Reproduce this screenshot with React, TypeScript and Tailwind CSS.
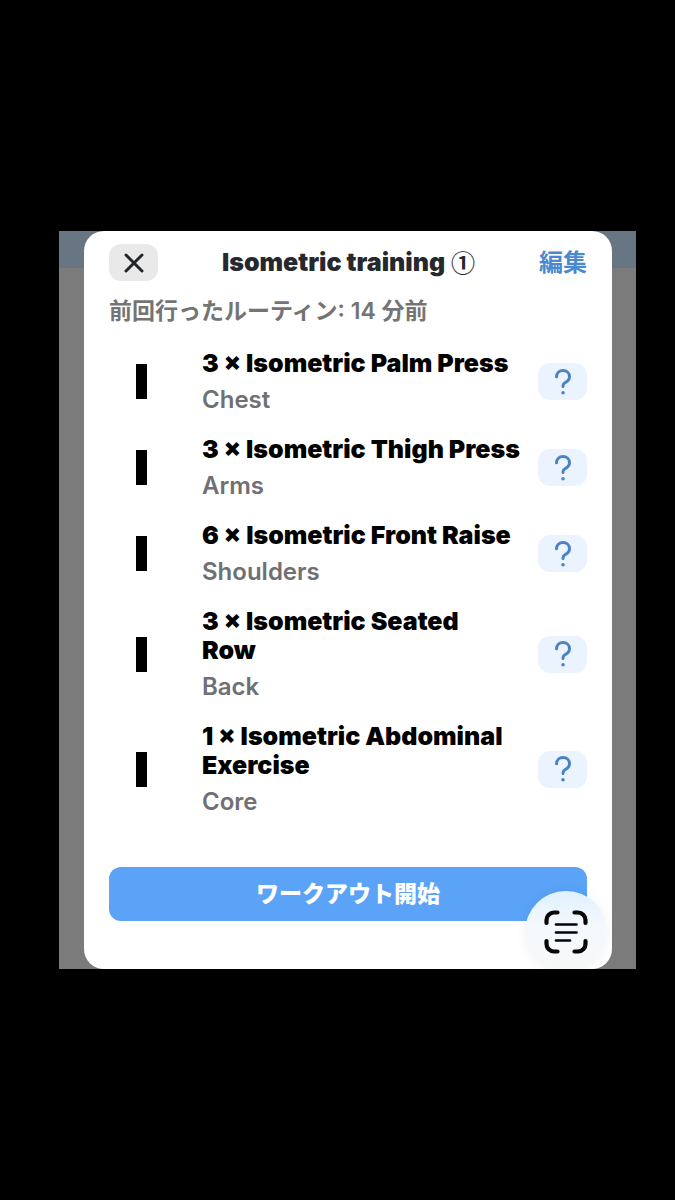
import { X } from "lucide-react";

const exercises = [
  { sets: 3, name: ["Isometric Palm Press"], muscle: "Chest" },
  { sets: 3, name: ["Isometric Thigh Press"], muscle: "Arms" },
  { sets: 6, name: ["Isometric Front Raise"], muscle: "Shoulders" },
  { sets: 3, name: ["Isometric Seated", "Row"], muscle: "Back" },
  { sets: 1, name: ["Isometric Abdominal", "Exercise"], muscle: "Core" },
];

function QuestionIcon() {
  return (
    <svg
      width="20"
      height="28"
      viewBox="0 0 20 28"
      fill="none"
      stroke="#4a82c4"
      strokeWidth="3"
      strokeLinecap="round"
      strokeLinejoin="round"
      aria-hidden="true"
    >
      <path d="M3.5 8.8C3.5 5 6.3 2.5 10 2.5s6.5 2.6 6.5 6.1c0 3.1-2 4.9-4.3 6-1.5.8-2.2 1.7-2.2 3.1v.8" />
      <circle cx="10" cy="24.7" r="1.8" fill="#4a82c4" stroke="none" />
    </svg>
  );
}

function ScanTextIcon() {
  return (
    <svg
      width="44"
      height="44"
      viewBox="0 0 44 44"
      fill="none"
      stroke="#050505"
      strokeLinecap="round"
      aria-hidden="true"
    >
      <g strokeWidth="4.2">
        <path d="M2.5 13V10a7.5 7.5 0 0 1 7.5-7.5h3.5" />
        <path d="M30.5 2.5H34a7.5 7.5 0 0 1 7.5 7.5v3" />
        <path d="M41.5 31V34a7.5 7.5 0 0 1-7.5 7.5h-3.5" />
        <path d="M13.5 41.5H10A7.5 7.5 0 0 1 2.5 34v-3" />
      </g>
      <g strokeWidth="2.6">
        <path d="M12 14.5h20.5" />
        <path d="M12 22.5h20.5" />
        <path d="M12 30.5h14" />
      </g>
    </svg>
  );
}

export default function App() {
  return (
    <div className="min-h-screen bg-black pt-[231px] pr-[39px] pb-16 pl-[59px] font-['Inter','Noto_Sans_CJK_JP',sans-serif]">
      <div className="relative overflow-hidden bg-[linear-gradient(#687583_0,#687583_37px,#7b7b7b_37px)] pr-6 pl-[25px]">
        <main className="rounded-[20px] bg-white px-[25px] pt-[13px] pb-12">
          <header className="flex items-center justify-between">
            <button
              type="button"
              aria-label="閉じる"
              className="flex h-[37px] w-[49px] items-center justify-center rounded-xl bg-[#e9e9e9] text-[#222529]"
            >
              <X size={32} strokeWidth={2.2} aria-hidden="true" />
            </button>
            <h1 className="flex items-center gap-1.5 text-[25px] leading-[29px] font-black text-[#25292e]">
              Isometric training
              <span className="pb-0.5 font-['Noto_Sans_CJK_JP',sans-serif] text-2xl leading-[29px] font-bold">
                ①
              </span>
            </h1>
            <button type="button" className="text-2xl font-bold text-[#4a88d0]">
              編集
            </button>
          </header>

          <p className="mt-[15px] text-[23px] leading-[30px] font-semibold text-[#747474]">
            前回行ったルーティン: 14 分前
          </p>

          <ul className="mt-[23px] flex flex-col gap-[21px]">
            {exercises.map((exercise) => (
              <li key={exercise.muscle} className="flex items-center">
                <div className="flex w-[65px] shrink-0 justify-center">
                  <span className="h-[35px] w-[11px] bg-black" />
                </div>
                <div className="ml-7 grow">
                  <h2 className="text-[25px] leading-[29px] font-black whitespace-nowrap text-black">
                    {exercise.sets} × {exercise.name[0]}
                    {exercise.name[1] && (
                      <>
                        <br />
                        {exercise.name[1]}
                      </>
                    )}
                  </h2>
                  <p className="mt-[7px] text-2xl leading-[29px] font-semibold text-[#6f7074]">
                    {exercise.muscle}
                  </p>
                </div>
                <button
                  type="button"
                  aria-label={exercise.name.join(" ")}
                  className="flex h-[37px] w-[49px] shrink-0 items-center justify-center rounded-xl bg-[#ebf4fe]"
                >
                  <QuestionIcon />
                </button>
              </li>
            ))}
          </ul>

          <button
            type="button"
            className="mt-[51px] h-[54px] w-full rounded-xl bg-[#5aa3f7] text-[23px] font-black text-white"
          >
            ワークアウト開始
          </button>
        </main>

        {/* floating scan button, cut off by the bottom edge */}
        <button
          type="button"
          aria-label="テキストをスキャン"
          className="absolute right-[29px] -bottom-1 flex size-[82px] items-center justify-center rounded-full bg-[linear-gradient(#e0f1ff,#f5f9fc_45%,#f7f7f7)] shadow-[0_0_12px_rgba(0,0,0,0.06)]"
        >
          <ScanTextIcon />
        </button>
      </div>
    </div>
  );
}
